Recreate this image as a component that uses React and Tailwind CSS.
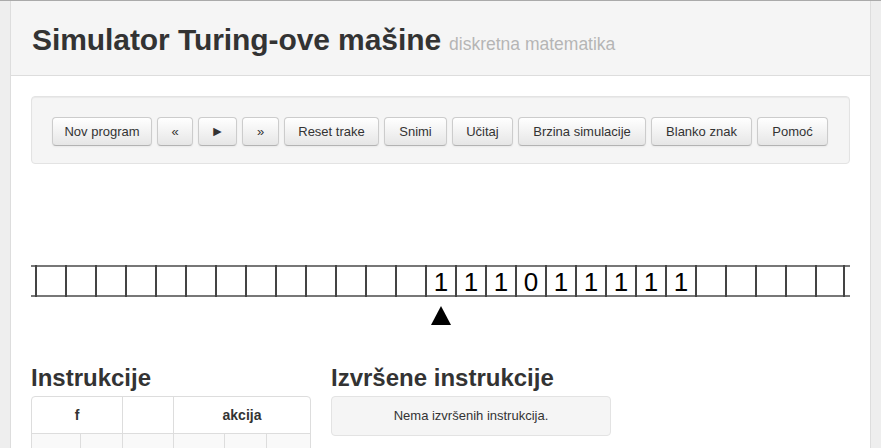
import React from 'react';

const buttons = [
  { label: 'Nov program', w: 'w-[100px]' },
  { label: '«', w: 'w-[36px]' },
  { label: '►', w: 'w-[39px]', small: true },
  { label: '»', w: 'w-[37px]' },
  { label: 'Reset trake', w: 'w-[95px]' },
  { label: 'Snimi', w: 'w-[63px]' },
  { label: 'Učitaj', w: 'w-[61px]' },
  { label: 'Brzina simulacije', w: 'w-[128px]' },
  { label: 'Blanko znak', w: 'w-[101px]' },
  { label: 'Pomoć', w: 'w-[71px]' },
];

// 13 blank cells, then the input, then blanks again
const tape = [
  ...Array(13).fill(''),
  '1', '1', '1', '0', '1', '1', '1', '1', '1',
  ...Array(5).fill(''),
];

const ToolButton = ({ label, w, small }) => (
  <button
    className={`${w} h-[29px] shrink-0 rounded-[4px] border border-[#ccc] border-b-[#b3b3b3] bg-gradient-to-b from-white to-[#e6e6e6] ${small ? 'text-[14px]' : 'text-[13px]'} text-[#333] shadow-[inset_0_1px_0_rgba(255,255,255,0.2),0_1px_2px_rgba(0,0,0,0.05)] flex items-center justify-center`}
  >
    {label}
  </button>
);

const Tape = () => (
  <div className="flex border-y-2 border-[#777] pl-[4px]">
    {tape.map((v, i) => (
      <div
        key={i}
        className={`w-[30px] h-[32px] -my-[2px] pt-[2px] border-l-2 border-[#444] text-center text-[26px] leading-[30px] text-black ${i === tape.length - 1 ? 'border-r-2' : ''}`}
      >
        {v}
      </div>
    ))}
  </div>
);

const Instrukcije = () => (
  <div className="w-[280px]">
    <h2 className="text-[24px] leading-[30px] font-bold text-[#333]">Instrukcije</h2>
    <div className="mt-[3px] rounded-[4px] border border-[#ddd] overflow-hidden grid grid-cols-[49px_42px_51px_51px_42px_43px] text-[14px] font-bold text-[#333]">
      <div className="col-span-2 h-[36px] flex items-center justify-center border-r border-[#ddd]">f</div>
      <div className="h-[36px] border-r border-[#ddd]" />
      <div className="col-span-3 h-[36px] flex items-center justify-center">akcija</div>
      {[0, 1, 2, 3, 4, 5].map((i) => (
        <div
          key={i}
          className={`h-[40px] bg-[#f9f9f9] border-t border-[#ddd] ${i < 5 ? 'border-r' : ''}`}
        />
      ))}
    </div>
  </div>
);

const Izvrsene = () => (
  <div className="w-[280px]">
    <h2 className="text-[24px] leading-[30px] font-bold text-[#333]">Izvršene instrukcije</h2>
    <div className="mt-[3px] h-[40px] rounded-[4px] border border-[#e3e3e3] bg-[#f5f5f5] flex items-center justify-center text-[13px] text-[#333]">
      Nema izvršenih instrukcija.
    </div>
  </div>
);

export default function App() {
  return (
    <div
      className="min-h-screen bg-[#eee] border-t border-[#aaa]"
      style={{ fontFamily: '"Liberation Sans", Arial, sans-serif' }}
    >
      <div className="mx-[10px] min-h-[447px] bg-white border-x border-[#ddd]">
        <div className="h-[75px] bg-[#f5f5f5] border-b border-[#ddd] px-[21px] pt-[21px]">
          <h1 className="flex items-baseline gap-[8px] leading-[36px]">
            <span className="text-[30px] font-bold text-[#333] tracking-[-0.08px]">Simulator Turing-ove mašine</span>
            <span className="text-[17.5px] text-[#b5b5b5]">diskretna matematika</span>
          </h1>
        </div>

        <div className="px-[20px] pt-[20px]">
          <div className="rounded-[4px] border border-[#e3e3e3] bg-[#f5f5f5] pt-[20px] pb-[17px] px-[20px] flex gap-[5px] shadow-[inset_0_1px_1px_rgba(0,0,0,0.05)]">
            {buttons.map((b) => (
              <ToolButton key={b.label} {...b} />
            ))}
          </div>

          <div className="mt-[101px]">
            <Tape />
          </div>

          <div className="mt-[9px] ml-[400px] w-[20px] h-[19px]">
            <svg width="20" height="19" viewBox="0 0 20 19">
              <polygon points="10,0 20,19 0,19" fill="#000" />
            </svg>
          </div>

          <div className="mt-[38px] flex gap-[20px]">
            <Instrukcije />
            <Izvrsene />
          </div>
        </div>
      </div>
    </div>
  );
}
